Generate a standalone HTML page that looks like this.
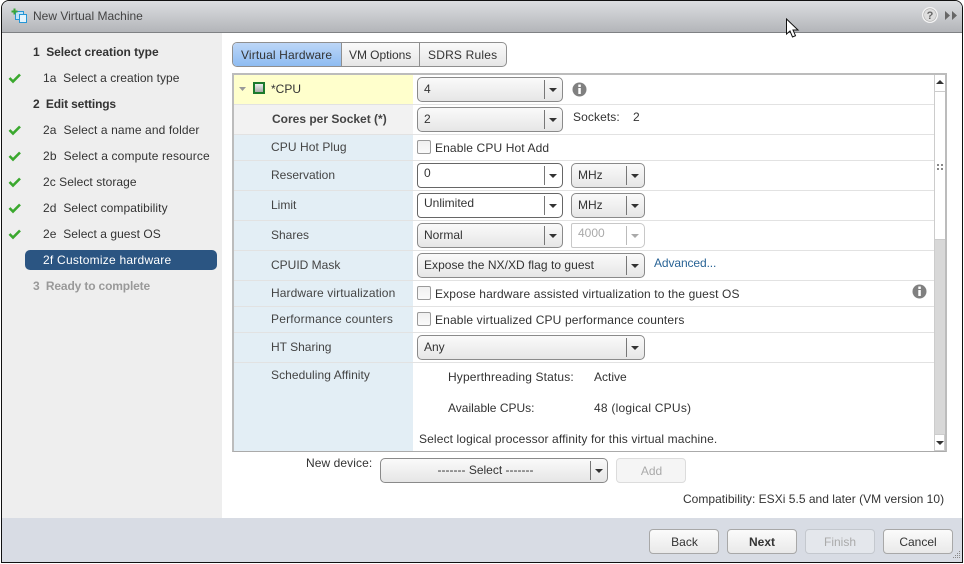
<!DOCTYPE html>
<html><head><meta charset="utf-8"><style>
html,body{margin:0;padding:0;width:964px;height:564px;overflow:hidden;background:#fff}
*{box-sizing:border-box}
body{font:12px/14px "Liberation Sans",Arial,sans-serif;color:#333;position:relative}
div,span.a,svg{position:absolute}
.t{white-space:nowrap;height:14px}
.b{font-weight:bold}
.c{height:25px;border:1px solid #8a8a8a;border-radius:5px;background:linear-gradient(#fafafa,#e6e6e6);}
.c .s{top:2px;bottom:2px;width:1px;background:#777}
.c .r{width:0;height:0;border-left:4px solid transparent;border-right:4px solid transparent;border-top:4px solid #333;top:10px}
.c .v{left:6px;top:4px;white-space:nowrap;color:#333}
.in{background:#fff;border-color:#666;border-radius:4px 5px 5px 4px}
.dis{border-color:#c8c8c8;background:#fff}
.dis .s{background:#bbb}.dis .r{border-top-color:#aaa}.dis .v{color:#aaa;top:2px}
.cb{width:14px;height:14px;border:1px solid #9a9a9a;border-radius:2px;background:linear-gradient(#f0f0f0,#fafafa)}
.ln{left:234px;width:700px;height:1px;background:#e2e2e2}
.lb{left:271px}
.btn{top:529px;width:70px;height:25px;border:1px solid #a8a8a8;border-radius:4px;background:linear-gradient(#fbfbfb,#e9e9e9);text-align:center;line-height:24px;color:#333}
</style></head><body>

<!-- window frame -->
<div style="left:1px;top:0;width:962px;height:563px;background:#fff;border:1px solid #111;border-radius:8px 8px 0 0;overflow:hidden">
  <div style="left:0;top:0;width:960px;height:32px;background:linear-gradient(#dcdee1,#b3b5b9);border-bottom:1px solid #7f8184"></div>
  <div style="left:0;top:32px;width:220px;height:485px;background:#eee"></div>
  <div style="left:0;top:517px;width:960px;height:44px;background:#d8dce4"></div>
</div>

<!-- title -->
<svg style="left:11px;top:8px" width="17" height="17" viewBox="0 0 17 17">
  <rect x="4.500" y="3.500" width="8" height="8" fill="#bfe3f8" stroke="#2496d6"/>
  <rect x="8.500" y="6.500" width="7" height="8" fill="#e3f3fc" stroke="#2496d6"/>
  <path d="M3.500 0.500v6M0.500 3.500h6" stroke="#3aa63a" stroke-width="2"/>
</svg>
<div class="t" style="left:33px;top:9px;color:#444;">New Virtual Machine</div>
<svg style="left:921px;top:6px" width="18" height="18" viewBox="0 0 18 18">
  <circle cx="9" cy="9" r="8" fill="#f4f4f4"/>
  <circle cx="9" cy="9" r="6.300" fill="#dedede" stroke="#a8a8a8" stroke-width=".6"/>
  <text x="9" y="13" font-family="Liberation Sans" font-size="11" font-weight="bold" text-anchor="middle" fill="#666">?</text>
</svg>
<svg style="left:945px;top:10px" width="13" height="11" viewBox="0 0 13 11">
  <path d="M0 1l5 4.500L0 10zM7 1l5 4.500L7 10z" fill="#666"/>
</svg>
<svg style="left:785px;top:18px" width="17" height="21" viewBox="0 0 17 21">
  <path d="M1.500 1v15l3.500-3 2.500 6 3-1.300-2.500-5.700h5z" fill="#fff" stroke="#111" stroke-width="1"/>
</svg>

<!-- nav -->
<div class="t b" style="left:33px;top:45px;letter-spacing:-.05px">1&nbsp; Select creation type</div>
<div class="t" style="left:43px;top:71px;letter-spacing:.04px">1a&nbsp; Select a creation type</div>
<div class="t b" style="left:33px;top:97px;letter-spacing:-.15px">2&nbsp; Edit settings</div>
<div class="t" style="left:43px;top:123px;letter-spacing:.11px">2a&nbsp; Select a name and folder</div>
<div class="t" style="left:43px;top:149px;letter-spacing:.14px">2b&nbsp; Select a compute resource</div>
<div class="t" style="left:43px;top:175px;letter-spacing:.05px">2c Select storage</div>
<div class="t" style="left:43px;top:201px;letter-spacing:.08px">2d&nbsp; Select compatibility</div>
<div class="t" style="left:43px;top:227px;letter-spacing:.05px">2e&nbsp; Select a guest OS</div>
<div style="left:25px;top:250px;width:192px;height:20px;border-radius:5px;background:#2b5582"></div>
<div class="t" style="left:43px;top:253px;color:#fff;letter-spacing:.24px">2f Customize hardware</div>
<div class="t b" style="left:33px;top:279px;color:#999;letter-spacing:-.15px">3&nbsp; Ready to complete</div>
<svg style="left:8px;top:71px" width="14" height="14" viewBox="0 0 14 14"><path d="M1.500 7l3.500 3.500 7-7" fill="none" stroke="#3aa82e" stroke-width="2.600"/></svg>
<svg style="left:8px;top:123px" width="14" height="14" viewBox="0 0 14 14"><path d="M1.500 7l3.500 3.500 7-7" fill="none" stroke="#3aa82e" stroke-width="2.600"/></svg>
<svg style="left:8px;top:149px" width="14" height="14" viewBox="0 0 14 14"><path d="M1.500 7l3.500 3.500 7-7" fill="none" stroke="#3aa82e" stroke-width="2.600"/></svg>
<svg style="left:8px;top:175px" width="14" height="14" viewBox="0 0 14 14"><path d="M1.500 7l3.500 3.500 7-7" fill="none" stroke="#3aa82e" stroke-width="2.600"/></svg>
<svg style="left:8px;top:201px" width="14" height="14" viewBox="0 0 14 14"><path d="M1.500 7l3.500 3.500 7-7" fill="none" stroke="#3aa82e" stroke-width="2.600"/></svg>
<svg style="left:8px;top:227px" width="14" height="14" viewBox="0 0 14 14"><path d="M1.500 7l3.500 3.500 7-7" fill="none" stroke="#3aa82e" stroke-width="2.600"/></svg>

<!-- tabs -->
<div style="left:232px;top:42px;width:275px;height:25px;border:1px solid #8f8f8f;border-radius:5px;background:linear-gradient(#fafafa,#e6e6e6);overflow:hidden">
  <div style="left:0;top:0;width:108px;height:23px;background:linear-gradient(#bcd6f7,#8ebcf2)"></div>
  <div style="left:108px;top:0;width:1px;height:23px;background:#8f8f8f"></div>
  <div style="left:186px;top:0;width:1px;height:23px;background:#8f8f8f"></div>
</div>
<div class="t" style="left:241px;top:48px;letter-spacing:.13px">Virtual Hardware</div>
<div class="t" style="left:349px;top:48px;letter-spacing:-.05px">VM Options</div>
<div class="t" style="left:428px;top:48px;letter-spacing:.2px">SDRS Rules</div>

<!-- table -->
<div style="left:232px;top:73px;width:715px;height:379px;border:2px solid #bcbcbc;border-bottom:1px solid #aaa;background:#fff"></div>
<div style="left:234px;top:75px;width:179px;height:376px;background:#e3eef5"></div>
<div style="left:234px;top:75px;width:179px;height:29px;background:#ffffcc"></div>
<div style="left:234px;top:105px;width:179px;height:29px;background:#f2f2f2"></div>
<div class="ln" style="top:104px"></div>
<div class="ln" style="top:134px"></div>
<div class="ln" style="top:160px"></div>
<div class="ln" style="top:190px"></div>
<div class="ln" style="top:220px"></div>
<div class="ln" style="top:250px"></div>
<div class="ln" style="top:280px"></div>
<div class="ln" style="top:306px"></div>
<div class="ln" style="top:332px"></div>
<div class="ln" style="top:362px"></div>

<!-- scrollbar -->
<div style="left:934px;top:75px;width:11px;height:376px;background:#d8d8d8;border-left:1px solid #ccc"></div>
<div style="left:934px;top:75px;width:11px;height:165px;background:#fff;border-left:1px solid #ccc;border-bottom:1px solid #ccc"></div>
<div style="left:934px;top:91px;width:11px;height:1px;background:#ccc"></div>
<div style="left:934px;top:434px;width:11px;height:17px;background:#fff;border:1px solid #ccc"></div>
<svg style="left:936px;top:79px" width="8" height="6"><path d="M0 5l4-4 4 4z" fill="#333"/></svg>
<svg style="left:936px;top:440px" width="8" height="6"><path d="M0 1l4 4 4-4z" fill="#333"/></svg>
<svg style="left:936px;top:164px" width="8" height="8"><path d="M1 0h2v2H1zM5 0h2v2H5zM1 4h2v2H1zM5 4h2v2H5z" fill="#888"/></svg>

<!-- labels -->
<svg style="left:239px;top:86px" width="8" height="6"><path d="M0 1h7L3.500 5z" fill="#999"/></svg>
<svg style="left:253px;top:82px" width="13" height="13" viewBox="0 0 13 13">
  <defs><linearGradient id="g" x1="0" y1="0" x2="0" y2="1"><stop offset="0" stop-color="#eee"/><stop offset="1" stop-color="#aaa"/></linearGradient></defs>
  <rect x="0" y="0" width="12" height="12" fill="#1c7a2c"/>
  <rect x="2" y="2" width="8" height="8" fill="url(#g)"/>
</svg>
<div class="t" style="left:271px;top:82px;color:#333">*CPU</div>
<div class="t b" style="left:272px;top:112px;color:#444">Cores per Socket (*)</div>
<div class="t lb" style="top:140px;color:#444;letter-spacing:.08px">CPU Hot Plug</div>
<div class="t lb" style="top:168px;color:#444">Reservation</div>
<div class="t lb" style="top:198px;color:#444">Limit</div>
<div class="t lb" style="top:228px;color:#444">Shares</div>
<div class="t lb" style="top:258px;color:#444">CPUID Mask</div>
<div class="t lb" style="top:286px;color:#444;letter-spacing:.1px">Hardware virtualization</div>
<div class="t lb" style="top:312px;color:#444;letter-spacing:.2px">Performance counters</div>
<div class="t lb" style="top:340px;color:#444">HT Sharing</div>
<div class="t lb" style="top:368px;color:#444;letter-spacing:.06px">Scheduling Affinity</div>

<!-- controls -->
<div class="c" style="left:417px;top:77px;width:146px"><div class="v">4</div><div class="s" style="left:126px"></div><div class="r" style="left:131px"></div></div>
<svg style="left:572px;top:82px" width="15" height="15" viewBox="0 0 15 15"><circle cx="7.500" cy="7.500" r="7" fill="#808080"/><rect x="6.300" y="2.500" width="2.500" height="2.500" fill="#fff"/><rect x="6.300" y="6" width="2.500" height="6" fill="#fff"/></svg>

<div class="c" style="left:417px;top:107px;width:146px"><div class="v">2</div><div class="s" style="left:126px"></div><div class="r" style="left:131px"></div></div>
<div class="t" style="left:573px;top:110px;letter-spacing:.1px">Sockets:</div>
<div class="t" style="left:633px;top:110px">2</div>

<div class="cb" style="left:417px;top:140px"></div>
<div class="t" style="left:435px;top:141px;letter-spacing:.12px">Enable CPU Hot Add</div>

<div class="c in" style="left:417px;top:163px;width:146px"><div class="v" style="top:2px">0</div><div class="s" style="left:126px"></div><div class="r" style="left:131px"></div></div>
<div class="c" style="left:571px;top:163px;width:74px"><div class="v">MHz</div><div class="s" style="left:54px"></div><div class="r" style="left:59px"></div></div>

<div class="c in" style="left:417px;top:193px;width:146px"><div class="v" style="top:2px">Unlimited</div><div class="s" style="left:126px"></div><div class="r" style="left:131px"></div></div>
<div class="c" style="left:571px;top:193px;width:74px"><div class="v">MHz</div><div class="s" style="left:54px"></div><div class="r" style="left:59px"></div></div>

<div class="c" style="left:417px;top:223px;width:146px"><div class="v">Normal</div><div class="s" style="left:126px"></div><div class="r" style="left:131px"></div></div>
<div class="c dis" style="left:571px;top:223px;width:74px;border-radius:2px 5px 5px 2px"><div class="v">4000</div><div class="s" style="left:54px"></div><div class="r" style="left:59px"></div></div>

<div class="c" style="left:417px;top:253px;width:228px"><div class="v" style="letter-spacing:.04px">Expose the NX/XD flag to guest</div><div class="s" style="left:208px"></div><div class="r" style="left:213px"></div></div>
<div class="t" style="left:654px;top:256px;color:#2a6496;letter-spacing:-.1px">Advanced...</div>

<div class="cb" style="left:417px;top:286px"></div>
<div class="t" style="left:435px;top:287px;letter-spacing:.13px">Expose hardware assisted virtualization to the guest OS</div>
<svg style="left:912px;top:284px" width="15" height="15" viewBox="0 0 15 15"><circle cx="7.500" cy="7.500" r="7" fill="#808080"/><rect x="6.300" y="2.500" width="2.500" height="2.500" fill="#fff"/><rect x="6.300" y="6" width="2.500" height="6" fill="#fff"/></svg>

<div class="cb" style="left:417px;top:312px"></div>
<div class="t" style="left:435px;top:313px;letter-spacing:.14px">Enable virtualized CPU performance counters</div>

<div class="c" style="left:417px;top:335px;width:228px"><div class="v">Any</div><div class="s" style="left:208px"></div><div class="r" style="left:213px"></div></div>

<div class="t" style="left:448px;top:370px;letter-spacing:.14px">Hyperthreading Status:</div>
<div class="t" style="left:594px;top:370px">Active</div>
<div class="t" style="left:448px;top:401px">Available CPUs:</div>
<div class="t" style="left:594px;top:401px;letter-spacing:.23px">48 (logical CPUs)</div>
<div class="t" style="left:419px;top:432px;letter-spacing:.12px">Select logical processor affinity for this virtual machine.</div>

<!-- new device -->
<div class="t" style="left:306px;top:456px;letter-spacing:.08px">New device:</div>
<div class="c" style="left:380px;top:458px;width:228px"><div class="v" style="left:0;width:209px;text-align:center">------- Select -------</div><div class="s" style="left:209px"></div><div class="r" style="left:214px"></div></div>
<div style="left:616px;top:458px;width:70px;height:25px;border:1px solid #dcdcdc;border-radius:4px;background:#f5f5f5;text-align:center;line-height:24px;color:#aaa;padding-left:1px">Add</div>
<div class="t" style="left:683px;top:492px;letter-spacing:.02px">Compatibility: ESXi 5.5 and later (VM version 10)</div>

<!-- footer buttons -->
<div class="btn" style="left:649px;padding-left:1px">Back</div>
<div class="btn b" style="left:727px">Next</div>
<div class="btn" style="left:805px;color:#aaa;border-color:#c4c8ce;background:#e4e7ec">Finish</div>
<div class="btn" style="left:883px">Cancel</div>
<svg style="left:951px;top:550px" width="11" height="11"><path d="M8 1h1v1H8zM6 3h1v1H6zM8 3h1v1H8zM4 5h1v1H4zM6 5h1v1H6zM8 5h1v1H8zM2 7h1v1H2zM4 7h1v1H4zM6 7h1v1H6zM8 7h1v1H8z" fill="#888"/></svg>
</body></html>
